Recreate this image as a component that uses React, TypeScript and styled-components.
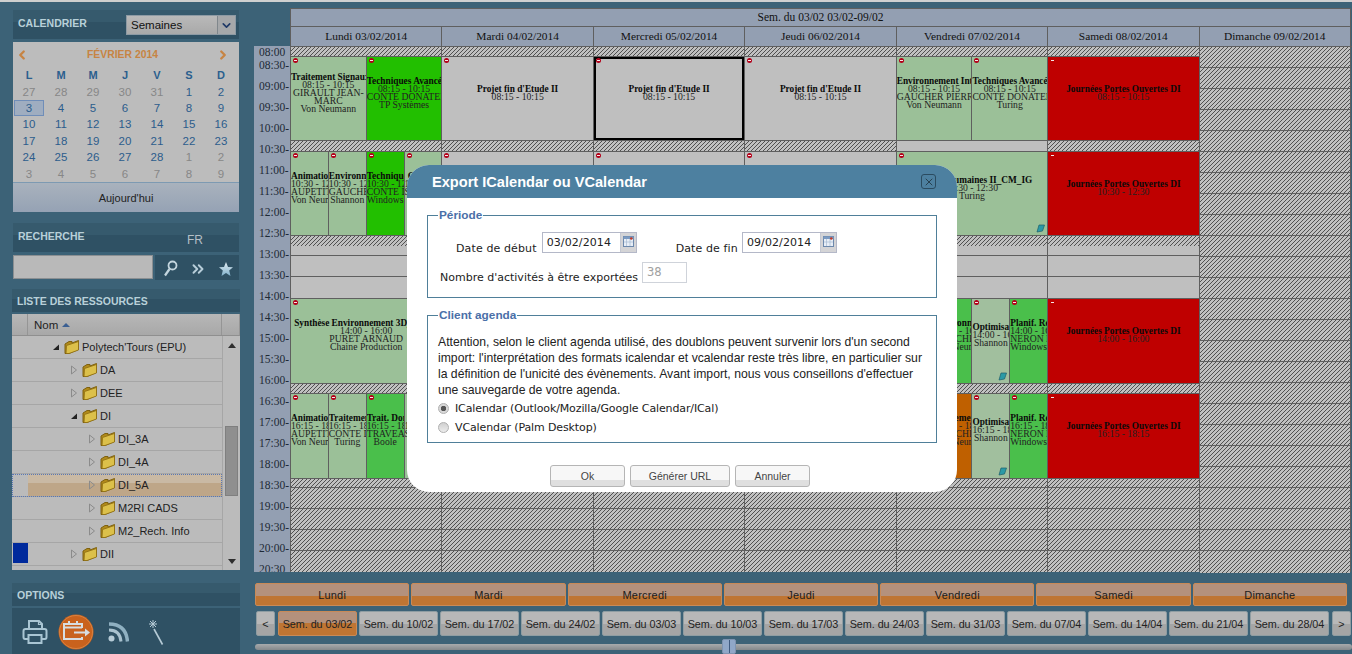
import React from "react";
import styled, { createGlobalStyle } from "styled-components";
import { ChevronDown, ChevronLeft, ChevronRight, ChevronsRight, X } from "lucide-react";

const GlobalStyle = createGlobalStyle`
  html, body {
    margin: 0;
    padding: 0;
    width: 1352px;
    height: 654px;
    overflow: hidden;
    background: #3c6277;
  }
  * { box-sizing: border-box; }
`;

const Page = styled.div`
  position: relative;
  width: 1352px;
  height: 654px;
  overflow: hidden;
  border-top: 2px solid #cfd0d0;
  display: flex;
  font-family: "Liberation Sans", Arial, sans-serif;
`;

/* ---------- sidebar ---------- */
const Sidebar = styled.aside`
  width: 254px;
  flex: none;
  padding: 8px 15px 0 13px;
  display: flex;
  flex-direction: column;
`;

const PanelHeader = styled.div<{ $h: number; $wide?: boolean; $mt?: number }>`
  height: ${(p) => p.$h}px;
  margin: ${(p) => p.$mt ?? 0}px ${(p) => (p.$wide ? -1 : 0)}px 0;
  padding: ${(p) => (p.$wide ? 6 : 7)}px 5px 0;
  display: flex;
  justify-content: space-between;
  align-items: flex-start;
  background: linear-gradient(#365a6d 0 42%, #2f5164 42%);
  position: relative;
`;

const PanelTitle = styled.span`
  font-size: 10.5px;
  font-weight: 700;
  color: #b8d0d9;
  line-height: 13px;
`;

const ModeSelect = styled.div`
  width: 110px;
  height: 20px;
  margin: -2px -2px 0 0;
  border: 1px solid #8d9aa4;
  background: linear-gradient(#b9b9b9, #a9a9a9);
  display: flex;
  align-items: center;
  font-size: 11.5px;
  padding-left: 4px;
  color: #111;
  justify-content: space-between;
`;

const SelectArrow = styled.span`
  width: 18px;
  height: 18px;
  background: #a6a8aa;
  border-left: 1px solid #80878c;
  display: flex;
  align-items: center;
  justify-content: center;
  color: #203a68;
`;

const CalendarBox = styled.div`
  margin-top: 3px;
  height: 170px;
  background: #bcbcbc;
  display: flex;
  flex-direction: column;
`;

const CalendarNav = styled.div`
  height: 25px;
  flex: none;
  padding: 0 9px 0 2px;
  display: flex;
  align-items: center;
  justify-content: space-between;
  color: #c78443;
  font-size: 10.4px;
  font-weight: 700;
`;

const DayGrid = styled.div`
  display: grid;
  grid-template-columns: repeat(7, 32px);
  grid-auto-rows: 16.4px;
  justify-items: center;
  align-items: center;
  font-size: 11.5px;
  height: 115px;
`;

const WeekLetter = styled.span`
  font-weight: 700;
  font-size: 11px;
  color: #2b5f8e;
`;

const DayNum = styled.span<{ $muted?: boolean; $today?: boolean }>`
  width: 30px;
  height: 16px;
  display: flex;
  align-items: center;
  justify-content: center;
  color: ${(p) => (p.$muted ? "#878787" : "#2c5d8c")};
  background: ${(p) => (p.$today ? "#9fadc0" : "transparent")};
  border: 1px solid ${(p) => (p.$today ? "#6f8db8" : "transparent")};
`;

const TodayButton = styled.div`
  flex: 1;
  border-top: 1px solid #7d9ab2;
  background: linear-gradient(#a9b2bd, #95a2b4);
  display: flex;
  align-items: center;
  justify-content: center;
  font-size: 11px;
  color: #222;
`;

const LangTag = styled.span`
  font-size: 12px;
  color: #b4bfc6;
  margin: 3px 31px 0 0;
`;

const SearchRow = styled.div`
  margin-top: 3px;
  height: 25px;
  display: flex;
  gap: 2px;
`;

const SearchInput = styled.div`
  width: 140px;
  height: 24px;
  background: #b9b9b9;
  border: 1px solid #8b8f92;
`;

const SearchTools = styled.div`
  flex: 1;
  background: #2f5164;
  display: flex;
  align-items: center;
  padding: 2px 0 0 8px;
  gap: 11px;
  color: #b7cdd9;
`;

const ResourceTable = styled.div`
  margin: 2px -1px 0;
  height: 256px;
  background: #bbb;
  display: flex;
  flex-direction: column;
  font-size: 11px;
  color: #222;
`;

const TableHead = styled.div`
  height: 22px;
  flex: none;
  display: flex;
  background: linear-gradient(#b7b7b7, #a8a8a8);
  border-bottom: 1px solid #8f8f8f;
`;

const HeadCell = styled.div<{ $w?: number }>`
  width: ${(p) => (p.$w ? `${p.$w}px` : "auto")};
  flex: ${(p) => (p.$w ? "none" : 1)};
  border-right: 1px solid #959595;
  font-size: 11.5px;
  display: flex;
  align-items: center;
  gap: 4px;
  padding-left: ${(p) => (p.$w ? 0 : 6)}px;
`;

const SortMark = styled.i`
  width: 0;
  height: 0;
  border-left: 4px solid transparent;
  border-right: 4px solid transparent;
  border-bottom: 4px solid #3b5f92;
`;

const TableBody = styled.div`
  flex: 1;
  display: flex;
  min-height: 0;
`;

const TreeRows = styled.div`
  width: 210px;
  flex: none;
`;

const TreeRow = styled.div<{ $selected?: boolean }>`
  height: 23px;
  display: flex;
  align-items: stretch;
  border-bottom: 1px solid #a6a6a6;
  outline: ${(p) => (p.$selected ? "1px dotted #5877b5" : "none")};
  outline-offset: -1px;
`;

const TreeSwatch = styled.div<{ $color?: string }>`
  width: 15px;
  margin: 0 0 2px 1px;
  flex: none;
  background: ${(p) => p.$color ?? "transparent"};
`;

const TreeCell = styled.div<{ $level: number; $selected?: boolean }>`
  flex: 1;
  padding-left: ${(p) => 6 + p.$level * 18}px;
  display: flex;
  align-items: center;
  gap: 2px;
  background: ${(p) =>
    p.$selected ? "linear-gradient(#c9b9a4 0 40%, #bea688 40%)" : "transparent"};
`;

const Twist = styled.span`
  width: 8px;
  display: flex;
  margin-right: 2px;
  flex: none;
`;

const Scroller = styled.div`
  flex: 1;
  border-left: 1px solid #a6a6a6;
  position: relative;
`;

const ScrollThumb = styled.div`
  position: absolute;
  left: 2px;
  top: 90px;
  width: 13px;
  height: 70px;
  background: #8f8f8f;
  border: 1px solid #7f7f7f;
`;

const ScrollArrow = styled.i<{ $down?: boolean }>`
  position: absolute;
  left: 5px;
  top: ${(p) => (p.$down ? 223 : 7)}px;
  width: 0;
  height: 0;
  border-left: 4px solid transparent;
  border-right: 4px solid transparent;
  border-${(p) => (p.$down ? "top" : "bottom")}: 5px solid #2e2e2e;
`;

const OptionsBar = styled.div`
  margin: 2px -1px 0;
  flex: 1;
  background: #2f5164;
  display: flex;
  align-items: center;
  padding: 2px 0 0 10px;
`;

const OptionIcon = styled.span<{ $w: number }>`
  width: ${(p) => p.$w}px;
  display: flex;
  justify-content: center;
`;

/* ---------- timetable ---------- */
const Main = styled.main`
  flex: 1;
  padding-top: 6px;
  min-width: 0;
  display: flex;
  flex-direction: column;
`;

const HeadStack = styled.div`
  margin-left: 36px;
  width: 1061px;
  font-family: "Liberation Serif", "Times New Roman", serif;
  color: #111;
  background: #939fb2;
  border-top: 1px solid #5f5f5f;
  border-right: 1px solid #5f5f5f;
`;

const WeekTitle = styled.div`
  height: 18px;
  border-left: 1px solid #5f5f5f;
  border-bottom: 1px solid #5f5f5f;
  font-size: 11.5px;
  line-height: 16px;
  text-align: center;
`;

const DayHeads = styled.div`
  display: flex;
  height: 19px;
`;

const DayHead = styled.div`
  flex: 1;
  border-left: 1px solid #5f5f5f;
  font-size: 11.4px;
  line-height: 18px;
  text-align: center;
`;

const TimeTable = styled.div`
  height: 526px;
  display: flex;
  flex: none;
  font-family: "Liberation Serif", "Times New Roman", serif;
  border-top: 1px solid #5f5f5f;
  color: #222;
`;

const TimeColumn = styled.div`
  width: 37px;
  flex: none;
  background: #939fb2;
  border-right: 1px solid #5f5f5f;
  padding: 0 0 0 5px;
  margin-top: -1px;
  font-size: 11.5px;
  line-height: 13px;
  display: flex;
  flex-direction: column;
  gap: 8px;
  overflow: hidden;
  color: #1e2a36;
  white-space: nowrap;
`;

const TimeLabel = styled.span<{ $first?: boolean }>`
  flex: none;
  height: 13px;
  margin-bottom: ${(p) => (p.$first ? -8 : 0)}px;
`;

const Days = styled.div`
  width: 1060px;
  display: flex;
  border-right: 1px solid #5f5f5f;
`;

const DayColumn = styled.div`
  flex: 1;
  min-width: 0;
  display: flex;
  flex-direction: column;
  border-right: 1px solid #5f5f5f;
  &:last-child { border-right: none; }
`;

// 4px tile with a one pixel diagonal, so the stripes stay sharp
const hatchTile =
  "url(\"data:image/svg+xml,%3Csvg xmlns='http://www.w3.org/2000/svg' width='4' height='4' shape-rendering='crispEdges'%3E%3Crect width='4' height='4' fill='%23c0c0c0'/%3E%3Cpath d='M3 0h1v1H3zM2 1h1v1H2zM1 2h1v1H1zM0 3h1v1H0z' fill='%23505050'/%3E%3C/svg%3E\")";

const Slot = styled.div<{ $h: number; $plain?: boolean; $line?: boolean }>`
  height: ${(p) => p.$h}px;
  flex: none;
  background: ${(p) => (p.$plain ? "#bfbfbf" : hatchTile)};
  border-bottom: ${(p) => (p.$line ? "1px solid #5f5f5f" : "none")};
`;

const EventRow = styled.div<{ $h: number }>`
  height: ${(p) => p.$h}px;
  flex: none;
  display: flex;
  border-top: 1px solid #5f5f5f;
  border-bottom: 1px solid #5f5f5f;
`;

const tones: Record<string, string> = {
  gray: "#bfbfbf",
  sage: "#9bc098",
  mint: "#a1bf9e",
  lime: "#22bf00",
  green: "#4abf4b",
  red: "#bf0000",
  orange: "#bf6000",
};

const EventCell = styled.div<{ $tone: string; $picked?: boolean }>`
  position: relative;
  flex: 1;
  min-width: 0;
  overflow: hidden;
  background: ${(p) => tones[p.$tone]};
  border-right: 1px solid #5f5f5f;
  outline: ${(p) => (p.$picked ? "2px solid #000" : "none")};
  outline-offset: -2px;
  padding-bottom: 12px;
  display: flex;
  flex-direction: column;
  justify-content: center;
  text-align: center;
  font-size: 9.7px;
  line-height: 8px;
  white-space: nowrap;
  &:last-child { border-right: none; }
`;

const EventTitle = styled.div`
  font-weight: 700;
  font-size: 9.3px;
  color: #0a0a0a;
`;

const EventLine = styled.div`
  color: #222;
`;

const StopDot = styled.i<{ $bare?: boolean }>`
  position: absolute;
  left: 2px;
  top: 1px;
  width: 5px;
  height: 5px;
  border-radius: 50%;
  background: ${(p) => (p.$bare ? "transparent" : "#b3001a")};
  &::after {
    content: "";
    position: absolute;
    left: 1px;
    top: 2px;
    width: 3px;
    height: 1px;
    background: #f4e6e6;
  }
`;

const NoteIcon = styled.span`
  position: absolute;
  right: 2px;
  bottom: 2px;
  display: flex;
`;

/* ---------- bottom bars ---------- */
const DayBars = styled.div`
  margin: 11px 0 0 1px;
  width: 1092px;
  display: flex;
  gap: 2px;
`;

const DayBar = styled.div`
  flex: 1;
  height: 23px;
  border: 1px solid #c98a57;
  background: linear-gradient(#b4917c 0 55%, #bf7533 55%);
  font-size: 11px;
  letter-spacing: 0.2px;
  color: #1b1b1b;
  display: flex;
  align-items: center;
  justify-content: center;
  border-radius: 2px;
`;

const WeekBar = styled.div`
  margin: 5px 0 0 1px;
  display: flex;
  gap: 2px;
`;

const WeekTab = styled.div<{ $active?: boolean; $w?: number; $mx?: number }>`
  width: ${(p) => p.$w ?? 79}px;
  margin: 0 ${(p) => p.$mx ?? 0}px;
  height: 25px;
  flex: none;
  border: 1px solid ${(p) => (p.$active ? "#c98a57" : "#8f9da2")};
  border-radius: 2px;
  background: ${(p) =>
    p.$active
      ? "linear-gradient(#b4917c 0 50%, #bf7533 50%)"
      : "linear-gradient(#b8b8b8 0 52%, #a5a5a5 52%)"};
  font-size: 10.8px;
  letter-spacing: -0.05px;
  color: #222;
  display: flex;
  align-items: center;
  justify-content: center;
`;

const SliderTrack = styled.div`
  position: relative;
  margin: 8px 0 0 1px;
  height: 6px;
  background: linear-gradient(#a7aaac, #83888b);
  border-radius: 3px;
`;

const SliderThumb = styled.div`
  position: absolute;
  left: 467px;
  top: -5px;
  width: 14px;
  height: 15px;
  background: #90a7c8;
  border: 1px solid #7e93b0;
  border-radius: 2px;
  display: flex;
  justify-content: center;
  &::after {
    content: "";
    width: 1px;
    height: 100%;
    background: #3f5a80;
  }
`;

/* ---------- dialog ---------- */
const Dialog = styled.section`
  position: absolute;
  left: 407px;
  top: 163px;
  width: 550px;
  height: 327px;
  background: #fff;
  border-radius: 22px;
  overflow: hidden;
  display: flex;
  flex-direction: column;
`;

const DialogHead = styled.header`
  height: 33px;
  flex: none;
  background: #4d80a0;
  padding: 0 21px 0 25px;
  display: flex;
  align-items: center;
  justify-content: space-between;
`;

const DialogTitle = styled.h2`
  margin: 0;
  font-size: 14.6px;
  font-weight: 700;
  color: #fff;
`;

const CloseBox = styled.span`
  width: 15px;
  height: 15px;
  border: 1px solid #2b4b60;
  border-radius: 3px;
  display: flex;
  align-items: center;
  justify-content: center;
  color: #16242c;
`;

const DialogBody = styled.div`
  padding: 10px 20px 0;
  display: flex;
  flex-direction: column;
  gap: 10px;
`;

const Group = styled.fieldset<{ $h: number }>`
  margin: 0;
  padding: 0 0 0 10px;
  height: ${(p) => p.$h}px;
  border: 1px solid #4f7f99;
  min-width: 0;
`;

const GroupLegend = styled.legend`
  margin-left: 0;
  padding: 0 1px;
  font-size: 11.8px;
  font-weight: 700;
  color: #4a6fa8;
  line-height: 14px;
`;

const FormRow = styled.div<{ $mt: number; $pl: number }>`
  display: flex;
  margin-top: ${(p) => p.$mt}px;
  padding-left: ${(p) => p.$pl}px;
  font-family: "DejaVu Sans", Verdana, sans-serif;
  font-size: 11px;
  color: #222;
`;

const FieldLabel = styled.label<{ $ml?: number; $mt: number; $mr: number; $track?: number }>`
  margin: ${(p) => p.$mt}px ${(p) => p.$mr}px 0 ${(p) => p.$ml ?? 0}px;
  line-height: 14px;
  white-space: nowrap;
  letter-spacing: ${(p) => p.$track ?? 0.12}px;
`;

const DateField = styled.div`
  width: 95px;
  height: 21px;
  display: flex;
  border: 1px solid #b4b8c8;
`;

const DateValue = styled.span`
  flex: 1;
  padding-left: 4px;
  line-height: 19px;
  font-size: 11px;
  letter-spacing: 0.1px;
`;

const DateButton = styled.span`
  width: 16px;
  background: #d4d4d6;
  border-left: 1px solid #c4c8d2;
  display: flex;
  align-items: flex-start;
  justify-content: center;
  padding-top: 3px;
`;

const CountField = styled.div`
  width: 45px;
  height: 21px;
  border: 1px solid #cfd3da;
  color: #a0a0a0;
  padding-left: 4px;
  line-height: 19px;
  font-size: 11.5px;
`;

const Warning = styled.p`
  margin: 12px 0 0;
  font-size: 12.2px;
  line-height: 16px;
  color: #222;
  white-space: nowrap;
`;

const RadioRow = styled.div<{ $mt: number }>`
  display: flex;
  align-items: center;
  gap: 6px;
  margin-top: ${(p) => p.$mt}px;
  height: 14px;
  font-family: "DejaVu Sans", Verdana, sans-serif;
  font-size: 11px;
  letter-spacing: -0.12px;
  color: #222;
`;

const RadioMark = styled.i<{ $on?: boolean }>`
  width: 11px;
  height: 11px;
  border-radius: 50%;
  flex: none;
  border: 1px solid #b0b0b0;
  background: ${(p) =>
    p.$on
      ? "radial-gradient(circle, #555 0 2.5px, #d8d8d8 3px)"
      : "linear-gradient(#d0d0d0, #ececec)"};
`;

const DialogActions = styled.div`
  margin: 22px 0 0 143px;
  display: flex;
  gap: 5px;
`;

const ActionButton = styled.button<{ $w: number }>`
  width: ${(p) => p.$w}px;
  height: 22px;
  padding: 0;
  border: 1px solid #b5b5b5;
  border-radius: 3px;
  background: linear-gradient(#f7f7f7 0 68%, #dfdfdf 68%);
  font-family: "Liberation Sans", Arial, sans-serif;
  font-size: 10.5px;
  color: #444;
`;

/* ---------- drawings ---------- */
const Folder = () => (
  <svg width="16" height="16" viewBox="0 0 16 16">
    <path d="M1 5 L5 2.5 L8 2.5 L8 4 L14.5 1.5 L14.5 10.5 L5 14.5 L1 14.5 Z" fill="#b18a1a" stroke="#7e6110" />
    <path d="M2 14.5 L2.5 6.5 L14.5 2.5 L14.5 11 L5 14.5 Z" fill="#dcc04a" stroke="#8d6c10" strokeWidth="0.8" />
  </svg>
);

const TwistOpen = () => (
  <svg width="8" height="8" viewBox="0 0 8 8">
    <path d="M1 7 L7 1.5 L7 7 Z" fill="#222" />
  </svg>
);

const TwistClosed = () => (
  <svg width="8" height="10" viewBox="0 0 8 10">
    <path d="M1.5 1 L6.5 5 L1.5 9 Z" fill="none" stroke="#8b8b8b" />
  </svg>
);

const CalendarGlyph = () => (
  <svg width="11" height="11" viewBox="0 0 11 11">
    <rect x="0.5" y="0.5" width="10" height="10" fill="#e8eef6" stroke="#6d89ad" />
    <rect x="0.5" y="0.5" width="10" height="2.5" fill="#7c9bc2" />
    <path d="M3.5 3v7M7 3v7M1 6h9" stroke="#a8bad2" strokeWidth="0.7" />
    <circle cx="8.3" cy="2.5" r="1.3" fill="#c0392b" />
  </svg>
);

const NoteGlyph = () => (
  <svg width="9" height="9" viewBox="0 0 9 9">
    <path d="M3 1 L8.5 1 L6.5 7 L1 8 Z" fill="#2a9aa6" stroke="#1c5e6a" strokeWidth="0.7" />
  </svg>
);

const LensGlyph = () => (
  <svg width="15" height="17" viewBox="0 0 15 17" fill="none" stroke="#c4d6df" strokeWidth="1.800">
    <circle cx="9.500" cy="5.500" r="4" />
    <path d="M6.500 9 L2 15.500" strokeWidth="2.200" />
  </svg>
);

const StarGlyph = () => (
  <svg width="16" height="16" viewBox="0 0 16 16">
    <defs>
      <linearGradient id="starFill" x1="0" y1="0" x2="0" y2="1">
        <stop offset="0" stopColor="#e3eef4" />
        <stop offset="1" stopColor="#7fb0cb" />
      </linearGradient>
    </defs>
    <path d="M8 1 L10 6 L15 6.3 L11.2 9.5 L12.5 15 L8 12 L3.5 15 L4.8 9.5 L1 6.3 L6 6 Z" fill="url(#starFill)" />
  </svg>
);

const PrinterGlyph = () => (
  <svg width="26" height="26" viewBox="0 0 26 26" fill="none" stroke="#a9c5d3" strokeWidth="2">
    <path d="M7 9 V2 H17 L20 5 V9" />
    <path d="M6 20 H3 Q1.500 20 1.500 18 V12 Q1.500 10 3.500 10 H22.500 Q24.500 10 24.500 12 V18 Q24.500 20 23 20 H20" />
    <rect x="6.500" y="16" width="13" height="8" />
    <path d="M16.500 2 V5.500 H20" strokeWidth="1.200" />
  </svg>
);

const ExportGlyph = () => (
  <svg width="36" height="36" viewBox="0 0 36 36">
    <circle cx="18" cy="18" r="17.500" fill="#c9621d" />
    <circle cx="18" cy="18" r="16.500" fill="none" stroke="#d9813f" />
    <g fill="none" stroke="#d7dde0" strokeWidth="2">
      <path d="M24 14 V10 H6 V25 H24 V23" />
      <path d="M6 13.500 H24" />
      <path d="M11 7 V11 M19 7 V11" />
      <path d="M16 18.500 H29" />
    </g>
    <path d="M27 14.500 L32 18.500 L27 22.500 Z" fill="#d7dde0" />
  </svg>
);

const RssGlyph = () => (
  <svg width="21" height="20" viewBox="0 0 21 20" fill="none">
    <circle cx="3.500" cy="16.500" r="3" fill="#b7ccd7" />
    <path d="M1 8 Q12 8 13 19.500" stroke="#a9c2cf" strokeWidth="3" />
    <path d="M1 2 Q18 2 19.500 19.500" stroke="#8fb0c1" strokeWidth="3.500" />
  </svg>
);

const WandGlyph = () => (
  <svg width="18" height="26" viewBox="0 0 18 26" fill="none" stroke="#b6cbd6">
    <path d="M7 10 L15.500 25.500" strokeWidth="1.600" />
    <path d="M6 1 V9 M2 5 H10 M3 2 L9 8 M9 2 L3 8" strokeWidth="1" />
  </svg>
);

/* ---------- data ---------- */
type EventData = {
  tone: string;
  title: string;
  lines: string[];
  picked?: boolean;
  note?: boolean;
};

const ev = (tone: string, title: string, ...lines: string[]): EventData => ({ tone, title, lines });

const projet = (time: string, picked?: boolean): EventData => ({
  tone: "gray",
  title: "Projet fin d'Etude II",
  lines: [time],
  picked,
});

const jpo = (time: string) => ev("red", "Journées Portes Ouvertes DI", time);

const narrowAm: EventData[] = [
  ev("sage", "Animation", "10:30 - 12:30", "AUPETIT", "Von Neumann"),
  ev("sage", "Environnement", "10:30 - 12:30", "GAUCHER", "Shannon"),
  ev("lime", "Techniques", "10:30 - 12:30", "CONTE DONATEL", "Windows"),
  ev("sage", "Gestion", "10:30 - 12:30", "SOUKHAL", "Turing"),
];

const narrowPm: EventData[] = [
  ev("sage", "Animation", "16:15 - 18:15", "AUPETIT", "Von Neumann"),
  ev("sage", "Traitement", "16:15 - 18:15", "CONTE DONATEL", "Turing"),
  ev("green", "Trait. Données", "16:15 - 18:15", "TRAVEAUX", "Boole"),
  ev("sage", "Gestion", "16:15 - 18:15", "SOUKHAL", "Turing"),
];

const lateMorning = (tone: string): EventData[] => [
  { tone, title: "Projet fin d'Etude II", lines: ["10:30 - 12:30"] },
];

type DayData = { head: string; rows: EventData[][] | null; gapPlain?: boolean };

const days: DayData[] = [
  {
    head: "Lundi 03/02/2014",
    rows: [
      [
        ev("sage", "Traitement Signaux", "08:15 - 10:15", "GIRAULT JEAN-", "MARC", "Von Neumann"),
        ev("lime", "Techniques Avancées", "08:15 - 10:15", "CONTE DONATEL", "TP Systèmes"),
      ],
      narrowAm,
      [ev("sage", "Synthèse Environnement 3D_ACRV", "14:00 - 16:00", "PURET ARNAUD", "Chaine Production")],
      narrowPm,
    ],
  },
  {
    head: "Mardi 04/02/2014",
    rows: [[projet("08:15 - 10:15")], lateMorning("gray"), lateMorning("gray"), lateMorning("gray")],
  },
  {
    head: "Mercredi 05/02/2014",
    rows: [[projet("08:15 - 10:15", true)], lateMorning("gray"), lateMorning("gray"), lateMorning("gray")],
  },
  {
    head: "Jeudi 06/02/2014",
    rows: [[projet("08:15 - 10:15")], lateMorning("gray"), lateMorning("gray"), lateMorning("gray")],
  },
  {
    head: "Vendredi 07/02/2014",
    gapPlain: true,
    rows: [
      [
        ev("sage", "Environnement Interactif", "08:15 - 10:15", "GAUCHER PIERRE", "Von Neumann"),
        ev("sage", "Techniques Avancées", "08:15 - 10:15", "CONTE DONATEL", "Turing"),
      ],
      [{ ...ev("sage", "Sciences Humaines II_CM_IG", "10:30 - 12:30", "Turing"), note: true }],
      [
        ev("sage", "Synthèse", "14:00 - 16:00", "PURET", "Boole"),
        ev("green", "Environn", "14:00 - 16:00", "GAUCHER", "Von Neumann"),
        { ...ev("mint", "Optimisation", "14:00 - 16:00", "Shannon"), note: true },
        ev("green", "Planif. Ressources", "14:00 - 16:00", "NERON E", "Windows"),
      ],
      [
        ev("sage", "Synthèse", "16:15 - 18:15", "PURET", "Boole"),
        ev("orange", "Traitement", "16:15 - 18:15", "GAUCHER", "Von Neumann"),
        { ...ev("mint", "Optimisation", "16:15 - 18:15", "Shannon"), note: true },
        ev("green", "Planif. Ressources", "16:15 - 18:15", "NERON E", "Windows"),
      ],
    ],
  },
  {
    head: "Samedi 08/02/2014",
    rows: [
      [jpo("08:15 - 10:15")],
      [jpo("10:30 - 12:30")],
      [jpo("14:00 - 16:00")],
      [jpo("16:15 - 18:15")],
    ],
  },
  { head: "Dimanche 09/02/2014", rows: null },
];

const times: string[] = [];
for (let h = 8; h <= 20; h++) {
  times.push(`${String(h).padStart(2, "0")}:00`);
  times.push(`${String(h).padStart(2, "0")}:30`);
}

const calendarCells: { n: number; muted?: boolean; today?: boolean }[] = [
  ...[27, 28, 29, 30, 31].map((n) => ({ n, muted: true })),
  { n: 1 },
  { n: 2 },
  { n: 3, today: true },
  ...Array.from({ length: 25 }, (_, i) => ({ n: i + 4 })),
  ...[1, 2, 3, 4, 5, 6, 7, 8, 9].map((n) => ({ n, muted: true })),
];

const tree: { label: string; level: number; open?: boolean; selected?: boolean; swatch?: string }[] = [
  { label: "Polytech'Tours (EPU)", level: 1, open: true },
  { label: "DA", level: 2 },
  { label: "DEE", level: 2 },
  { label: "DI", level: 2, open: true },
  { label: "DI_3A", level: 3 },
  { label: "DI_4A", level: 3 },
  { label: "DI_5A", level: 3, selected: true },
  { label: "M2RI CADS", level: 3 },
  { label: "M2_Rech. Info", level: 3 },
  { label: "DII", level: 2, swatch: "#002a9c" },
];

const weeks = [
  "03/02", "10/02", "17/02", "24/02", "03/03", "10/03", "17/03",
  "24/03", "31/03", "07/04", "14/04", "21/04", "28/04",
];

const Event = ({ data }: { data: EventData }) => (
  <EventCell $tone={data.tone} $picked={data.picked}>
    <StopDot $bare={data.tone === "red"} />
    <EventTitle>{data.title}</EventTitle>
    {data.lines.map((line) => (
      <EventLine key={line}>{line}</EventLine>
    ))}
    {data.note && (
      <NoteIcon>
        <NoteGlyph />
      </NoteIcon>
    )}
  </EventCell>
);

const lowerSlots = [21, 21, 21, 21];

const DayCol = ({ day }: { day: DayData }) => {
  if (!day.rows) {
    return (
      <DayColumn>
        {Array.from({ length: 25 }, (_, i) => (
          <Slot key={i} $h={i === 24 ? 22 : 21} $line={i < 24} />
        ))}
      </DayColumn>
    );
  }
  const [r1, r2, r3, r4] = day.rows;
  return (
    <DayColumn>
      <Slot $h={9} />
      <EventRow $h={85}>{r1.map((e, i) => <Event key={i} data={e} />)}</EventRow>
      <Slot $h={10} $plain={day.gapPlain} />
      <EventRow $h={85}>{r2.map((e, i) => <Event key={i} data={e} />)}</EventRow>
      <Slot $h={10} />
      <Slot $plain $h={10} $line />
      <Slot $plain $h={21} $line />
      <Slot $plain $h={21} />
      <EventRow $h={86}>{r3.map((e, i) => <Event key={i} data={e} />)}</EventRow>
      <Slot $h={9} />
      <EventRow $h={86}>{r4.map((e, i) => <Event key={i} data={e} />)}</EventRow>
      <Slot $h={9} $line />
      {lowerSlots.map((h, i) => (
        <Slot key={i} $h={h} $line={i < 3} />
      ))}
    </DayColumn>
  );
};

const App = () => (
  <Page>
    <GlobalStyle />
    <Sidebar>
      <PanelHeader $h={29}>
        <PanelTitle>CALENDRIER</PanelTitle>
        <ModeSelect>
          Semaines
          <SelectArrow>
            <ChevronDown size={13} strokeWidth={3} />
          </SelectArrow>
        </ModeSelect>
      </PanelHeader>
      <CalendarBox>
        <CalendarNav>
          <ChevronLeft size={14} strokeWidth={4} />
          FÉVRIER 2014
          <ChevronRight size={14} strokeWidth={4} />
        </CalendarNav>
        <DayGrid>
          {["L", "M", "M", "J", "V", "S", "D"].map((d, i) => (
            <WeekLetter key={i}>{d}</WeekLetter>
          ))}
          {calendarCells.map((c, i) => (
            <DayNum key={i} $muted={c.muted} $today={c.today}>
              {c.n}
            </DayNum>
          ))}
        </DayGrid>
        <TodayButton>Aujourd'hui</TodayButton>
      </CalendarBox>

      <PanelHeader $h={29} $mt={11}>
        <PanelTitle>RECHERCHE</PanelTitle>
        <LangTag>FR</LangTag>
      </PanelHeader>
      <SearchRow>
        <SearchInput />
        <SearchTools>
          <LensGlyph />
          <ChevronsRight size={18} strokeWidth={2.6} />
          <StarGlyph />
        </SearchTools>
      </SearchRow>

      <PanelHeader $h={23} $wide $mt={9}>
        <PanelTitle>LISTE DES RESSOURCES</PanelTitle>
      </PanelHeader>
      <ResourceTable>
        <TableHead>
          <HeadCell $w={16} />
          <HeadCell>
            Nom <SortMark />
          </HeadCell>
          <HeadCell $w={18} />
        </TableHead>
        <TableBody>
          <TreeRows>
            {tree.map((row) => (
              <TreeRow key={row.label} $selected={row.selected}>
                <TreeSwatch $color={row.swatch} />
                <TreeCell $level={row.level} $selected={row.selected}>
                  <Twist>{row.open ? <TwistOpen /> : <TwistClosed />}</Twist>
                  <Folder />
                  {row.label}
                </TreeCell>
              </TreeRow>
            ))}
          </TreeRows>
          <Scroller>
            <ScrollArrow />
            <ScrollThumb />
            <ScrollArrow $down />
          </Scroller>
        </TableBody>
      </ResourceTable>

      <PanelHeader $h={23} $wide $mt={13}>
        <PanelTitle>OPTIONS</PanelTitle>
      </PanelHeader>
      <OptionsBar>
        <OptionIcon $w={26}><PrinterGlyph /></OptionIcon>
        <OptionIcon $w={55}><ExportGlyph /></OptionIcon>
        <OptionIcon $w={30}><RssGlyph /></OptionIcon>
        <OptionIcon $w={46}><WandGlyph /></OptionIcon>
      </OptionsBar>
    </Sidebar>

    <Main>
      <HeadStack>
        <WeekTitle>Sem. du 03/02 03/02-09/02</WeekTitle>
        <DayHeads>
          {days.map((d) => (
            <DayHead key={d.head}>{d.head}</DayHead>
          ))}
        </DayHeads>
      </HeadStack>
      <TimeTable>
        <TimeColumn>
          {times.slice(0, 26).map((t, i) => (
            <TimeLabel key={t} $first={i === 0}>
              {i === 0 || i === 25 ? t : `${t}-`}
            </TimeLabel>
          ))}
        </TimeColumn>
        <Days>
          {days.map((d) => (
            <DayCol key={d.head} day={d} />
          ))}
        </Days>
      </TimeTable>

      <DayBars>
        {["Lundi", "Mardi", "Mercredi", "Jeudi", "Vendredi", "Samedi", "Dimanche"].map((d) => (
          <DayBar key={d}>{d}</DayBar>
        ))}
      </DayBars>
      <WeekBar>
        <WeekTab $w={19} $mx={1}>&lt;</WeekTab>
        {weeks.map((w, i) => (
          <WeekTab key={w} $active={i === 0}>
            Sem. du {w}
          </WeekTab>
        ))}
        <WeekTab $w={19} $mx={1}>&gt;</WeekTab>
      </WeekBar>
      <SliderTrack>
        <SliderThumb />
      </SliderTrack>
    </Main>

    <Dialog>
      <DialogHead>
        <DialogTitle>Export ICalendar ou VCalendar</DialogTitle>
        <CloseBox>
          <X size={12} strokeWidth={1.4} />
        </CloseBox>
      </DialogHead>
      <DialogBody>
        <Group $h={90}>
          <GroupLegend>Période</GroupLegend>
          <FormRow $mt={10} $pl={18}>
            <FieldLabel $mt={10} $mr={5}>Date de début</FieldLabel>
            <DateField>
              <DateValue>03/02/2014</DateValue>
              <DateButton><CalendarGlyph /></DateButton>
            </DateField>
            <FieldLabel $ml={39} $mt={10} $mr={4}>Date de fin</FieldLabel>
            <DateField>
              <DateValue>09/02/2014</DateValue>
              <DateButton><CalendarGlyph /></DateButton>
            </DateField>
          </FormRow>
          <FormRow $mt={6} $pl={2}>
            <FieldLabel $mt={9} $mr={4} $track={0}>Nombre d'activités à être exportées</FieldLabel>
            <CountField>38</CountField>
          </FormRow>
        </Group>
        <Group $h={135}>
          <GroupLegend>Client agenda</GroupLegend>
          <Warning>
            Attention, selon le client agenda utilisé, des doublons peuvent survenir lors d'un second
            <br />
            import: l'interprétation des formats icalendar et vcalendar reste très libre, en particulier sur
            <br />
            la définition de l'unicité des évènements. Avant import, nous vous conseillons d'effectuer
            <br />
            une sauvegarde de votre agenda.
          </Warning>
          <RadioRow $mt={3}>
            <RadioMark $on />
            ICalendar (Outlook/Mozilla/Google Calendar/ICal)
          </RadioRow>
          <RadioRow $mt={5}>
            <RadioMark />
            VCalendar (Palm Desktop)
          </RadioRow>
        </Group>
      </DialogBody>
      <DialogActions>
        <ActionButton $w={75}>Ok</ActionButton>
        <ActionButton $w={100}>Générer URL</ActionButton>
        <ActionButton $w={75}>Annuler</ActionButton>
      </DialogActions>
    </Dialog>
  </Page>
);

export default App;
